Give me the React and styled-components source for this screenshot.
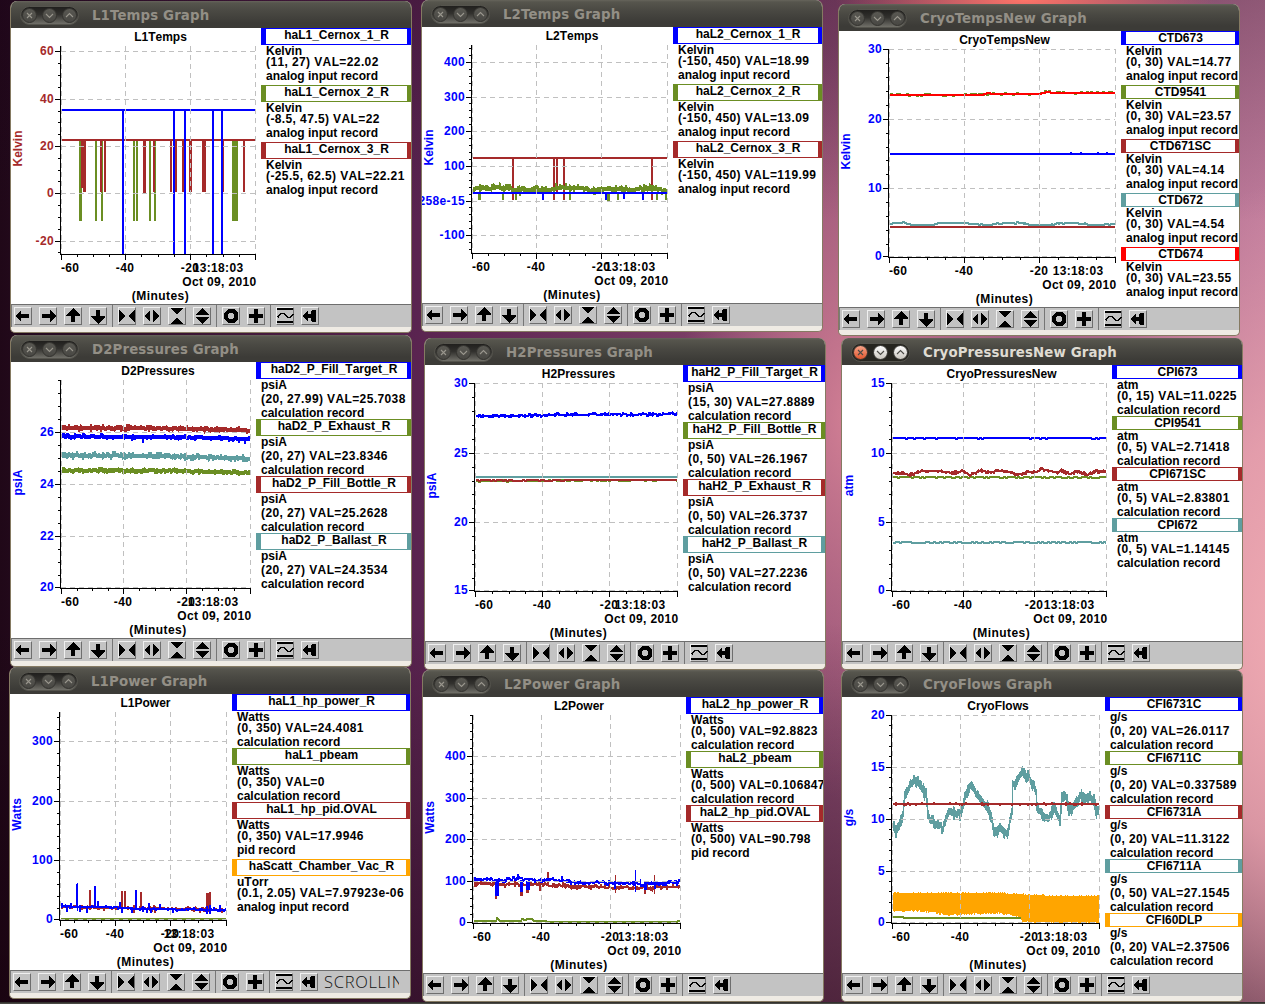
import React from 'react';
import styled, { createGlobalStyle } from 'styled-components';

const BLUE = '#0000ff';
const OLIVE = '#6b8e23';
const BROWN = '#a52a2a';
const CADET = '#5f9ea0';
const RED = '#ff0000';
const ORANGE = '#ffa500';

const GlobalStyle = createGlobalStyle`
    html, body {
        margin: 0;
        height: 100%;
        overflow: hidden;
        background: #2c0a24;
    }
`

const Desktop = styled.div`
    position: relative;
    width: 1265px;
    height: 1004px;
    overflow: hidden;
    background:
        radial-gradient(ellipse 190px 36px at 1025px 0, #ff7468, rgba(255, 110, 110, 0) 100%),
        radial-gradient(ellipse 240px 460px at 1300px 640px, #f0abb2 0%, rgba(236, 165, 175, 0.8) 45%, rgba(200, 120, 150, 0) 100%),
        linear-gradient(180deg, rgba(30, 5, 30, 0.3) 0, rgba(30, 5, 30, 0) 22%, rgba(20, 0, 10, 0) 62%, rgba(20, 0, 10, 0.5) 100%),
        radial-gradient(ellipse 170px 380px at 850px 420px, rgba(216, 132, 152, 0.9) 0%, rgba(200, 120, 145, 0) 100%),
        linear-gradient(90deg, #200818 0%, #260b20 3%, #5a2450 33%, #8a4a70 66%, #c07c9c 100%);
`

const Taskbar = styled.div`
    position: absolute;
    left: 0;
    right: 0;
    bottom: 0;
    height: 2px;
    background: #4a4944;
    border-top: 1px solid #33312e;
    box-sizing: border-box;
`

const Window = styled.section`
    position: absolute;
    left: ${props => props.x - 1}px;
    top: ${props => props.y - 27}px;
    width: 402px;
    height: 332px;
    box-sizing: border-box;
    display: flex;
    flex-direction: column;
    border: 1px solid #857a62;
    border-top: none;
    border-radius: 7px 7px 5px 5px;
    background: #efebe4;
    overflow: hidden;
`

const TitleBar = styled.header`
    flex: none;
    height: 27px;
    margin: 0 -1px;
    padding-left: 10px;
    box-sizing: border-box;
    display: flex;
    align-items: center;
    background: linear-gradient(#66645b 0, #56554d 2px, #4a4943 10px, #3c3b37 22px);
    h1 {
        margin: 1px 0 0 12px;
        font: bold 13.33px/27px "DejaVu Sans", sans-serif;
        letter-spacing: 0.12px;
        color: ${props => props.active ? '#dfdbd2' : '#938f86'};
        white-space: nowrap;
    }
`

const Controls = styled.svg`
    display: block;
    flex: none;
    margin-top: 2px;
`

const Content = styled.div`
    flex: none;
    height: 276px;
    display: flex;
    background: #fff;
    overflow: hidden;
`

const Plot = styled.svg`
    display: block;
    flex: none;
    font: bold 12px "Liberation Sans", Arial, sans-serif;
    font-kerning: none;
    .number {
        letter-spacing: 0.35px;
    }
    .caption {
        letter-spacing: 0.45px;
    }
`

const Legend = styled.div`
    flex: 1;
    min-width: 0;
    overflow: hidden;
    font: bold 12px/12px "Liberation Sans", Arial, sans-serif;
    font-kerning: none;
    color: #000;
    white-space: nowrap;
`

const CurveName = styled.div`
    height: ${props => props.tall ? 17 : 14}px;
    box-sizing: border-box;
    display: flex;
    justify-content: center;
    border: solid ${props => props.color};
    border-width: 1px 4px 1px 5px;
    line-height: 12px;
`

const LegendLine = styled.div`
    height: ${props => props.height}px;
    padding-left: 5px;
    letter-spacing: ${props => props.numeric ? '0.39px' : '0'};
`

const ToolBar = styled.div`
    flex: none;
    height: 23px;
    box-sizing: border-box;
    display: flex;
    align-items: flex-start;
    padding: 2px 0 0 2px;
    border-top: 1px solid #6e6e6e;
    border-left: 1px solid #7a7a7a;
    background: #c3c3c3;
    overflow: hidden;
`

const ToolGroup = styled.div`
    display: flex;
    gap: 7px;
`

const Separator = styled.div`
    flex: none;
    width: 1px;
    height: 23px;
    margin: -2px 5px 0;
    background: #767676;
`

const ToolButton = styled.button`
    flex: none;
    width: 18px;
    height: 18px;
    padding: 0;
    box-sizing: border-box;
    border: 1px solid;
    border-color: #f0f0f0 #6e6e6e #6e6e6e #f0f0f0;
    background: #c3c3c3;
    svg {
        display: block;
        margin: -1px;
    }
`

const Status = styled.div`
    width: 75px;
    margin-left: 6px;
    overflow: hidden;
    font: 300 16.5px/17px "Open Sans", sans-serif;
    letter-spacing: 0.7px;
    color: #111;
`

/* small deterministic generator so that the traces stay the same on every render */
const random = seed => {
    let s = seed * 7919 + 17;
    return () => {
        s = (s * 16807) % 2147483647;
        return s / 2147483647;
    };
}

const interpolate = (points, x) => {
    if (x <= points[0][0]) return points[0][1];
    for (let i = 1; i < points.length; i++) {
        const [x1, y1] = points[i];
        const [x0, y0] = points[i - 1];
        if (x <= x1) return y0 + (y1 - y0) * (x - x0) / (x1 - x0);
    }
    return points[points.length - 1][1];
}

/* one vertical run per pixel column, the noise is held over two columns */
const tracePath = ({ points, low, noise = 0, drift = 0, weight = 2, until }, end, seed) => {
    const rnd = random(seed);
    let d = '';
    let prev = null;
    let up = 0;
    let down = 0;
    let shift = 0;
    for (let x = 51; x < (until || end); x++) {
        if (x % 2 || low) {
            up = rnd();
            down = rnd();
            shift = (rnd() - 0.5) * 2 * drift;
        }
        const y = Math.round(interpolate(points, x) + shift);
        const from = prev === null ? y : prev;
        let top = Math.min(y, from) - weight / 2;
        let bottom = Math.max(y, from) + weight / 2;
        if (low) {
            bottom = interpolate(low, x) + down * noise;
            top = y - Math.round(up * 0.7);
        } else if (noise) {
            top -= up * up * noise;
            bottom += down * down * noise;
        }
        d += `M${x + 0.5} ${Math.round(top)}V${Math.round(bottom)}`;
        prev = y;
    }
    return d;
}

const Trace = ({ trace, end, seed }) => (
    <g>
        <path d={tracePath(trace, end, seed)} stroke={trace.color} fill="none" />
        {(trace.spikes || []).map(([x, y0, y1, w = 2], i) => (
            <rect key={i} x={Math.round(x - w / 2)} y={Math.min(y0, y1)} width={w} height={Math.abs(y1 - y0)} fill={trace.color} />
        ))}
    </g>
);

const range = (from, to, step) => {
    const list = [];
    for (let v = from; v <= to + 1e-6; v += step) list.push(v);
    return list;
}

const Chart = ({ title, units, axisColor = BLUE, min, max, majors, minor, first, ticks, labels = {}, snap = Math.floor, traces }) => {
    const end = ticks[3];
    const py = v => Math.min(225, snap(226 - (v - min) / (max - min) * 208));
    const middle = (50 + end) / 2 + 2.5;
    return (
        <Plot width={end + 6} height={276} viewBox={`0 0 ${end + 6} 276`}>
            <g shapeRendering="crispEdges">
                {traces.map((trace, i) => <Trace key={i} trace={trace} end={end} seed={i + end} />)}
                <g stroke="#c0c0c0" strokeDasharray="5 4">
                    {majors.map(v => <path key={v} d={`M50 ${py(v) + 0.5}H${end}`} />)}
                    {ticks.map(x => <path key={x} d={`M${x + 0.5} 18V226`} />)}
                </g>
                <g stroke="#000">
                    <path d={`M49.5 18V227M50 226.5H${end + 1}`} />
                    {majors.map(v => <path key={v} d={`M44 ${py(v) + 0.5}H49`} />)}
                    {range(first, max, minor).map(v => <path key={v} d={`M47 ${py(v) + 0.5}H49`} />)}
                    {ticks.map((x, i) => (
                        <path key={x} d={`M${x + 0.5} 227V232` + (i < 3 ? [1, 2, 3].map(n => `M${Math.round(x + (ticks[i + 1] - x) * n / 4) + 0.5} 227V229`).join('') : '')} />
                    ))}
                </g>
            </g>
            <text x={middle} y="12.5" textAnchor="middle">{title}</text>
            <g className="number" fill={axisColor} textAnchor="end">
                {majors.map(v => <text key={v} x="43" y={py(v) + 4}>{labels[v] || v}</text>)}
            </g>
            <text transform="translate(11 120.5) rotate(-90)" textAnchor="middle" fill={axisColor}>{units}</text>
            <g className="number">
                <text x="50" y="244">-60</text>
                <text x={ticks[1]} y="244" textAnchor="middle">-40</text>
                <text x={ticks[2]} y="244" textAnchor="middle">-20</text>
                <text x={end - 11.5} y="244" textAnchor="end">13:18:03</text>
                <text x={end + 1.5} y="258" textAnchor="end">Oct 09, 2010</text>
            </g>
            <text className="caption" x={middle} y="272" textAnchor="middle">(Minutes)</text>
        </Plot>
    );
}

const LegendEntry = ({ color, name, units, value, record }) => (
    <React.Fragment>
        <CurveName color={color} tall={name.includes('_')}>{name}</CurveName>
        <LegendLine height={/[pg]/.test(units) ? 14 : 11}>{units}</LegendLine>
        <LegendLine height={14} numeric>{value}</LegendLine>
        <LegendLine height={/[pg]/.test(record) ? 15 : 12}>{record}</LegendLine>
    </React.Fragment>
);

const WindowControls = ({ active, id }) => (
    <Controls width="60" height="20" viewBox="0 0 60 20">
        <defs>
            <linearGradient id={`pill${id}`} x1="0" y1="0" x2="0" y2="1">
                <stop offset="0" stopColor="#1f1e1c" />
                <stop offset="0.45" stopColor="#32312e" />
                <stop offset="1" stopColor="#74736c" />
            </linearGradient>
            <linearGradient id={`close${id}`} x1="0" y1="0" x2="0" y2="1">
                <stop offset="0" stopColor={active ? '#f7a58a' : '#5a5953'} />
                <stop offset="1" stopColor={active ? '#e0552c' : '#484743'} />
            </linearGradient>
            <linearGradient id={`other${id}`} x1="0" y1="0" x2="0" y2="1">
                <stop offset="0" stopColor={active ? '#ffffff' : '#5a5953'} />
                <stop offset="1" stopColor={active ? '#c9c5bc' : '#484743'} />
            </linearGradient>
        </defs>
        <rect x="0.5" y="0.5" width="58" height="18" rx="9" fill={active ? '#26251f' : `url(#pill${id})`} stroke="#55544d" />
        {[9.5, 29.5, 49.5].map((cx, i) => (
            <circle key={cx} cx={cx} cy="9.5" r="7" fill={`url(#${i ? 'other' : 'close'}${id})`} stroke="#34332f" />
        ))}
        <g fill="none" stroke={active ? '#4b4a45' : '#99968d'} strokeWidth="1.1">
            <path d="M7 7L12 12M12 7L7 12" />
            <path d="M26 8L29.5 11.5L33 8" />
            <path d="M46 11L49.5 7.5L53 11" />
        </g>
    </Controls>
);

const ICONS = {
    left: <path d="M1 9L7 3V7H15V11H7V15Z" />,
    right: <path d="M17 9L11 3V7H3V11H11V15Z" />,
    up: <path d="M9 1L16 8V9H11V15H7V9H2V8Z" />,
    down: <path d="M9 17L2 10V9H7V3H11V9H16V10Z" />,
    narrow: <path d="M1 3L8 9L1 15ZM17 3L10 9L17 15Z" />,
    widen: <path d="M7 3L1 9L7 15ZM10 3L16 9L10 15Z" />,
    squash: <path d="M2 1H16L9 7ZM2 17H16L9 11Z" />,
    stretch: <path d="M2 8H16L9 1ZM2 10H16L9 17Z" />,
    ring: <path d="M6 2H12L16 6V12L12 16H6L2 12V6ZM7 6V7H6V11H7V12H11V11H12V7H11V6Z" fillRule="evenodd" />,
    plus: <path d="M7 2H11V7H16V11H11V16H7V11H2V7H7Z" />,
    wave: (
        <g>
            <path d="M1 1H17V3H1ZM1 14H17V16H1Z" />
            <path d="M1.5 10.5L5 6.5H8L12 10.5H14L17 7" fill="none" stroke="#000" strokeWidth="1.6" />
        </g>
    ),
    home: <path d="M1 9L7 4V7H10V4L12 3H15V15H12L10 14V11H7V14Z" />
};

const ToolGroups = [
    ['left', 'right', 'up', 'down'],
    ['narrow', 'widen', 'squash', 'stretch'],
    ['ring', 'plus'],
    ['wave', 'home']
];

const GraphWindow = ({ x, y, active, status, curves, ...chart }) => (
    <Window x={x} y={y}>
        <TitleBar active={active}>
            <WindowControls active={active} id={chart.title} />
            <h1>{chart.title} Graph</h1>
        </TitleBar>
        <Content>
            <Chart {...chart} />
            <Legend>
                {curves.map(([color, name, value, record, units = chart.units]) => (
                    <LegendEntry key={name} color={color} name={name} units={units} value={value} record={record} />
                ))}
            </Legend>
        </Content>
        <ToolBar>
            {ToolGroups.map((group, i) => (
                <React.Fragment key={i}>
                    {i > 0 && <Separator />}
                    <ToolGroup>
                        {group.map(name => (
                            <ToolButton key={name} aria-label={name}>
                                <svg width="18" height="18" viewBox="0 0 18 18" shapeRendering="crispEdges">{ICONS[name]}</svg>
                            </ToolButton>
                        ))}
                    </ToolGroup>
                </React.Fragment>
            ))}
            {status && <Status>{status}</Status>}
        </ToolBar>
    </Window>
);

const ANALOG = 'analog input record';
const CALC = 'calculation record';
const PID = 'pid record';

const flat = y => [[50, y], [300, y]];

const graphs = [
    {
        x: 11, y: 28, title: 'L1Temps', units: 'Kelvin', axisColor: BROWN,
        min: -25.5, max: 62.5, majors: [60, 40, 20, 0, -20], first: -25, minor: 5, ticks: [50, 114, 179, 244],
        traces: [
            { color: OLIVE, points: flat(112), spikes: [[69.5, 112, 193, 3], [85, 112, 193], [91, 112, 193], [123, 112, 193], [126, 112, 193], [139, 112, 193], [144, 112, 193], [224, 112, 193, 6]] },
            { color: BROWN, points: flat(112), spikes: [[71.5, 112, 160, 3], [73.5, 112, 164, 3], [90, 112, 164], [94, 112, 164], [133.5, 112, 165, 3], [143, 112, 164], [160, 112, 164], [164, 112, 164, 4], [172, 112, 164], [179.5, 112, 164, 3], [193, 112, 164, 4], [212, 112, 164], [233, 112, 164]] },
            { color: BLUE, points: flat(82), spikes: [[112, 82, 226], [163, 82, 226], [174, 82, 226], [202, 82, 226], [211, 82, 226]] }
        ],
        curves: [
            [BLUE, 'haL1_Cernox_1_R', '(11, 27) VAL=22.02', ANALOG],
            [OLIVE, 'haL1_Cernox_2_R', '(-8.5, 47.5) VAL=22', ANALOG],
            [BROWN, 'haL1_Cernox_3_R', '(-25.5, 62.5) VAL=22.21', ANALOG]
        ]
    },
    {
        x: 422, y: 27, title: 'L2Temps', units: 'Kelvin',
        min: -150, max: 450, majors: [400, 300, 200, 100, 0, -100], labels: { 0: '258e-15' }, first: -140, minor: 20, ticks: [50, 114, 179, 245],
        traces: [
            { color: BROWN, points: flat(131), spikes: [[91, 131, 173], [132, 131, 173], [135, 131, 165], [142, 131, 173], [230, 131, 173]] },
            { color: OLIVE, points: [[50, 161], [83, 161], [93, 163], [126, 163], [135, 161], [160, 161], [170, 164], [180, 162], [210, 163], [220, 161], [245, 164]], noise: 3.2, drift: 0.8, weight: 3, spikes: [[57.5, 165, 173, 3], [81, 165, 173], [94, 165, 173], [148, 165, 173], [186.5, 165, 174, 3], [196, 165, 173], [235, 165, 173], [244, 165, 173]] },
            { color: BLUE, points: flat(166), spikes: [[121, 166, 173], [184, 166, 173], [202, 166, 172], [221, 166, 173]] }
        ],
        curves: [
            [BLUE, 'haL2_Cernox_1_R', '(-150, 450) VAL=18.99', ANALOG],
            [OLIVE, 'haL2_Cernox_2_R', '(-150, 450) VAL=13.09', ANALOG],
            [BROWN, 'haL2_Cernox_3_R', '(-150, 450) VAL=119.99', ANALOG]
        ]
    },
    {
        x: 839, y: 31, title: 'CryoTempsNew', units: 'Kelvin', snap: Math.ceil,
        min: 0, max: 30, majors: [30, 20, 10, 0], first: 0, minor: 2, ticks: [50, 125, 200, 276],
        traces: [
            { color: OLIVE, points: [[50, 64], [142, 64], [150, 63], [200, 63], [207, 60], [215, 62], [276, 61.5]], drift: 0.8 },
            { color: BLUE, points: flat(123), spikes: [[232, 121, 123], [242, 121, 123], [259, 121, 123], [268, 121, 123]] },
            { color: BROWN, points: flat(196) },
            { color: CADET, points: [[50, 192], [66, 192], [71, 194], [91, 194], [99, 192], [124, 192], [131, 193], [148, 194], [164, 192], [183, 192], [191, 194], [211, 194], [221, 192], [238, 192], [254, 194], [276, 193]], drift: 0.55 },
            { color: RED, points: [[50, 64], [142, 64], [148, 62], [153, 63], [200, 63], [207, 61], [214, 62], [276, 62]] }
        ],
        curves: [
            [BLUE, 'CTD673', '(0, 30) VAL=14.77', ANALOG],
            [OLIVE, 'CTD9541', '(0, 30) VAL=23.57', ANALOG],
            [BROWN, 'CTD671SC', '(0, 30) VAL=4.14', ANALOG],
            [CADET, 'CTD672', '(0, 30) VAL=4.54', ANALOG],
            [RED, 'CTD674', '(0, 30) VAL=23.55', ANALOG]
        ]
    },
    {
        x: 11, y: 362, title: 'D2Pressures', units: 'psiA',
        min: 20, max: 28, majors: [26, 24, 22, 20], first: 20, minor: 0.5, ticks: [50, 112, 175, 239],
        traces: [
            { color: BROWN, points: [[50, 66], [155, 66.5], [200, 67.5], [239, 68.5]], noise: 2.5, drift: 0.5, weight: 3 },
            { color: BLUE, points: [[50, 74.5], [155, 75], [239, 77]], noise: 1.5, drift: 0.4, weight: 3, spikes: [[121, 75, 79], [132, 75, 81], [228, 77, 81], [234, 77, 82]] },
            { color: CADET, points: [[50, 93.5], [155, 94], [239, 96.5]], noise: 3, drift: 0.5, weight: 3 },
            { color: OLIVE, points: [[50, 108.5], [155, 108.5], [239, 111]], noise: 2, drift: 0.5, weight: 3 }
        ],
        curves: [
            [BLUE, 'haD2_P_Fill_Target_R', '(20, 27.99) VAL=25.7038', CALC],
            [OLIVE, 'haD2_P_Exhaust_R', '(20, 27) VAL=23.8346', CALC],
            [BROWN, 'haD2_P_Fill_Bottle_R', '(20, 27) VAL=25.2628', CALC],
            [CADET, 'haD2_P_Ballast_R', '(20, 27) VAL=24.3534', CALC]
        ]
    },
    {
        x: 425, y: 365, title: 'H2Pressures', units: 'psiA', snap: Math.ceil,
        min: 15, max: 30, majors: [30, 25, 20, 15], first: 15, minor: 1, ticks: [50, 117, 184, 252],
        traces: [
            { color: BLUE, points: [[50, 50.7], [75, 51], [117, 50.3], [140, 49.4], [230, 49.4], [252, 48.6]], noise: 1.3, drift: 0.4, weight: 2 },
            { color: OLIVE, points: [[50, 116], [110, 116], [160, 115.4], [252, 115.4]], drift: 0.6 },
            { color: BROWN, points: [[50, 115.4], [140, 115.4], [150, 115], [252, 115]], drift: 0.3 },
            { color: CADET, points: flat(112) }
        ],
        curves: [
            [BLUE, 'haH2_P_Fill_Target_R', '(15, 30) VAL=27.8889', CALC],
            [OLIVE, 'haH2_P_Fill_Bottle_R', '(0, 50) VAL=26.1967', CALC],
            [BROWN, 'haH2_P_Exhaust_R', '(0, 50) VAL=26.3737', CALC],
            [CADET, 'haH2_P_Ballast_R', '(0, 50) VAL=27.2236', CALC]
        ]
    },
    {
        x: 842, y: 365, active: true, title: 'CryoPressuresNew', units: 'atm', snap: Math.ceil,
        min: 0, max: 15, majors: [15, 10, 5, 0], first: 0, minor: 1, ticks: [50, 121, 192, 264],
        traces: [
            { color: BLUE, points: flat(73.2), drift: 0.4 },
            { color: OLIVE, points: flat(112.3), drift: 0.6 },
            { color: CADET, points: flat(177.5), drift: 0.5, weight: 2 },
            { color: BROWN, points: [[50, 108], [60, 108], [66, 110], [78, 106.3], [95, 106], [110, 108], [120, 105.7], [127, 110.3], [138, 105.3], [148, 107.7], [155, 105.7], [165, 106.3], [175, 110], [185, 107], [193, 107], [199, 104], [215, 107.7], [218, 105.3], [226, 109], [236, 106], [244, 110], [253, 106.3], [264, 106.3]], noise: 1.3, drift: 0.3 }
        ],
        curves: [
            [BLUE, 'CPI673', '(0, 15) VAL=11.0225', CALC],
            [OLIVE, 'CPI9541', '(0, 5) VAL=2.71418', CALC],
            [BROWN, 'CPI671SC', '(0, 5) VAL=2.83801', CALC],
            [CADET, 'CPI672', '(0, 5) VAL=1.14145', CALC]
        ]
    },
    {
        x: 10, y: 694, title: 'L1Power', units: 'Watts', status: 'SCROLLING',
        min: 0, max: 350, majors: [300, 200, 100, 0], first: 0, minor: 20, ticks: [50, 105, 160, 216],
        traces: [
            { color: OLIVE, points: flat(225) },
            { color: BROWN, points: [[50, 213], [110, 214], [216, 216]], noise: 1.6, drift: 0.3, spikes: [[80, 196, 214], [112, 197, 214], [115, 197, 214], [131, 198, 214], [197, 199, 218, 3], [200, 198, 218, 2], [94, 214, 217], [124, 214, 219], [145, 214, 219], [190, 214, 219]] },
            { color: BLUE, points: [[50, 212.5], [105, 213.3], [130, 215], [216, 215.7]], noise: 0.7, drift: 0.3, spikes: [[51.5, 209, 214], [57, 212, 218], [61, 209, 214], [66.5, 190, 214, 2], [67, 189, 217, 1], [70, 211, 218], [85, 192, 214], [77, 212, 219], [88, 207, 214], [110, 208, 214], [112, 214, 219], [126, 196, 216], [122, 214, 219], [133, 212, 218], [139, 209, 215], [137, 214, 219], [141, 214, 219], [150, 210, 216], [163, 215, 219], [167, 215, 218], [197, 212, 220], [200, 211, 220], [204, 213, 217], [210, 211, 218]] }
        ],
        curves: [
            [BLUE, 'haL1_hp_power_R', '(0, 350) VAL=24.4081', CALC],
            [OLIVE, 'haL1_pbeam', '(0, 350) VAL=0', CALC],
            [BROWN, 'haL1_hp_pid.OVAL', '(0, 350) VAL=17.9946', PID],
            [ORANGE, 'haScatt_Chamber_Vac_R', '(0.1, 2.05) VAL=7.97923e-06', ANALOG, 'uTorr']
        ]
    },
    {
        x: 423, y: 697, title: 'L2Power', units: 'Watts',
        min: 0, max: 500, majors: [400, 300, 200, 100, 0], first: 0, minor: 20, ticks: [50, 118, 187, 257],
        traces: [
            { color: BROWN, points: [[50, 187], [118, 187.5], [150, 189.5], [230, 191], [257, 189.7]], noise: 1.8, drift: 0.7, spikes: [[73, 187, 202], [75, 187, 198], [98.5, 187, 199, 3], [104, 190, 196, 3], [125, 175, 187], [117, 187, 194], [192, 178, 196, 1], [222, 188, 197], [231, 178, 197, 1]] },
            { color: BLUE, points: [[50, 183], [65, 182.3], [72, 184], [92, 181.7], [118, 183.5], [128, 182.5], [150, 185], [200, 186], [220, 187], [257, 185]], noise: 1.6, drift: 1, spikes: [[74, 183, 199, 4], [98.5, 183, 195, 3], [105, 184, 193, 4], [95, 177, 183], [139, 179, 184], [192, 184, 192], [212, 173, 195, 1], [222, 186, 193, 3], [217, 182, 190, 1], [232, 186, 192]] },
            { color: OLIVE, points: [[50, 224], [72, 224], [73, 221], [76, 223.6], [97, 224], [98, 222], [101, 223], [103, 222], [108, 222], [110, 224], [122, 224], [122.5, 225], [253, 225], [254, 224], [257, 224]] }
        ],
        curves: [
            [BLUE, 'haL2_hp_power_R', '(0, 500) VAL=92.8823', CALC],
            [OLIVE, 'haL2_pbeam', '(0, 500) VAL=0.106847', CALC],
            [BROWN, 'haL2_hp_pid.OVAL', '(0, 500) VAL=90.798', PID]
        ]
    },
    {
        x: 842, y: 697, title: 'CryoFlows', units: 'g/s',
        min: 0, max: 20, majors: [20, 15, 10, 5, 0], first: 0, minor: 1, ticks: [50, 118, 187, 257],
        traces: [
            { color: OLIVE, points: [[50, 220], [60, 220], [61, 221], [257, 221]], until: 195 },
            { color: CADET, points: [[50, 129], [53, 134], [56, 130], [60, 117], [62, 99], [66, 91], [71, 82], [75, 86], [80, 90], [83, 99], [85, 119], [90, 125], [95, 130], [100, 130], [103, 122], [106, 116], [111, 114], [116, 117], [120, 110], [122, 99], [126, 92], [129, 89], [133, 95], [136, 99], [140, 106], [145, 112], [148, 117], [150, 131], [153, 135], [158, 130], [164, 136], [168, 120], [169, 113], [170, 85], [172, 92], [175, 82], [181, 75], [186, 80], [191, 90], [193, 95], [194, 111], [198, 114], [203, 122], [208, 117], [211, 112], [217, 122], [219, 97], [223, 101], [226, 115], [231, 110], [237, 98], [241, 101], [246, 102], [251, 104], [254, 114], [257, 118]], noise: 4.5, drift: 2, weight: 5 },
            { color: BROWN, points: flat(107), noise: 0.7, drift: 0.5 },
            { color: ORANGE, points: [[50, 195.5], [80, 195.5], [118, 196.5], [160, 196.3], [190, 198], [215, 199], [257, 199.3]], low: [[50, 213], [75, 213], [88, 214.5], [103, 217], [140, 216], [155, 215], [168, 217], [178, 219], [180, 224], [257, 225.3]], noise: 2 }
        ],
        curves: [
            [BLUE, 'CFI6731C', '(0, 20) VAL=26.0117', CALC],
            [OLIVE, 'CFI6711C', '(0, 20) VAL=0.337589', CALC],
            [BROWN, 'CFI6731A', '(0, 20) VAL=11.3122', CALC],
            [CADET, 'CFI6711A', '(0, 50) VAL=27.1545', CALC],
            [ORANGE, 'CFI60DLP', '(0, 20) VAL=2.37506', CALC]
        ]
    }
];

const App = () => (
    <Desktop>
        <GlobalStyle />
        {graphs.map(graph => <GraphWindow key={graph.title} {...graph} />)}
        <Taskbar />
    </Desktop>
);

export default App;
